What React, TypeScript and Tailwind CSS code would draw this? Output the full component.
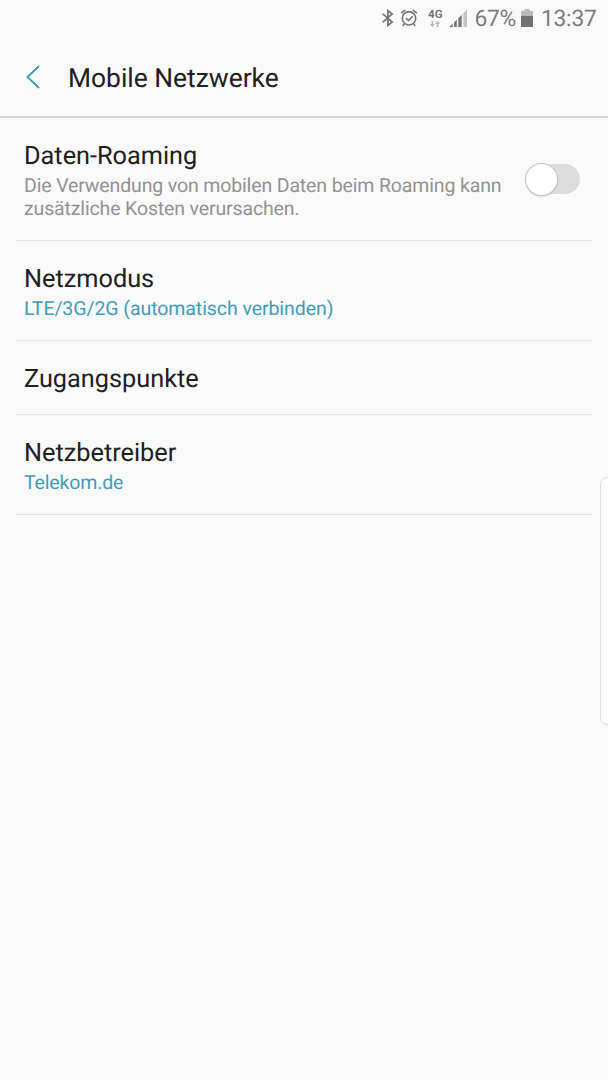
import type { ReactNode } from "react";

function BluetoothIcon() {
  return (
    <svg width="12" height="18" viewBox="0 0 12 18" fill="none" stroke="#757575" strokeWidth="1.7">
      <path d="M0.8 4.8 10.2 13 5.9 16.4V1.6L10.2 5 0.8 13.2" />
    </svg>
  );
}

function AlarmIcon() {
  return (
    <svg width="18" height="20" viewBox="0 0 18 20" fill="none" stroke="#757575" strokeWidth="1.6">
      <circle cx="9" cy="10.3" r="6.7" />
      <path d="M5.9 10 8.5 12.5 12.7 8.2M1.2 5.2 5.2 2M16.8 5.2 12.8 2M4.6 15.400 2.8 18M13.4 15.400 15.2 18" />
    </svg>
  );
}

function DataArrows() {
  return (
    <svg width="10" height="6" viewBox="0 0 10 6" fill="#b5b5b5">
      <path d="M1.6 0h1.6v3h1.6L2.4 6 0 3h1.6zM6.8 6h1.6V3H10L7.6 0 5.200 3h1.600z" />
    </svg>
  );
}

function SignalIcon() {
  return (
    <svg width="19" height="18" viewBox="0 0 19 18">
      <path fill="#757575" d="M0.200 18 3.700 14.600V18zM5 13.500 7.800 10.700V18H5zM9.300 9.200 12.700 5.800V18H9.300z" />
      <path fill="#c4c4c4" d="M14.300 4.200 18 0.500V18H14.300z" />
    </svg>
  );
}

function BatteryIcon() {
  return (
    <svg width="12" height="18" viewBox="0 0 12 18">
      <path fill="#bababa" d="M3.500 0h5v1.700H12V7H0V1.700h3.500z" />
      <path fill="#717171" d="M0 7h12v11H0z" />
    </svg>
  );
}

function StatusBar() {
  return (
    <div className="flex h-9 items-center text-[22.800px] leading-9 tracking-[-0.25px] text-[#7b7b7b]">
      <div className="ml-[382px] flex w-[18px] shrink-0">
        <BluetoothIcon />
      </div>
      <div className="flex w-7 shrink-0">
        <AlarmIcon />
      </div>
      <div className="flex w-[21px] shrink-0 flex-col">
        <span className="text-[11.500px] leading-[11px] font-bold tracking-[0.2px] text-[#757575]">4G</span>
        <div className="mt-px ml-[2px]">
          <DataArrows />
        </div>
      </div>
      <div className="flex w-[25.500px] shrink-0">
        <SignalIcon />
      </div>
      <span className="w-[46.500px] shrink-0 pt-0.5">67%</span>
      <div className="flex w-5 shrink-0">
        <BatteryIcon />
      </div>
      <span className="shrink-0 pt-0.5">13:37</span>
    </div>
  );
}

function Row({ title, detail, detailColor, children }: { title: string; detail?: ReactNode; detailColor?: string; children?: ReactNode }) {
  return (
    <li className="mx-[15px] flex items-start border-b border-[#e5e5e5] pt-6 pb-[19px] pl-[9px]">
      <div className="grow">
        <h2 className="text-[25.300px] leading-[30px] text-[#202020]">{title}</h2>
        {detail && <p className={`mt-0.5 mb-px text-[19.500px] leading-[23px] whitespace-nowrap ${detailColor}`}>{detail}</p>}
      </div>
      {children}
    </li>
  );
}

function Toggle() {
  return (
    <button role="switch" aria-checked="false" aria-label="Daten-Roaming" className="mt-[22px] mr-[13px] flex h-[30px] w-[54px] shrink-0 items-center rounded-full bg-[#dcdcdc]">
      <span className="-ml-[0.5px] size-[31px] shrink-0 rounded-full bg-white shadow-[0_0_0_1px_#c4c4c4,0_1px_2px_#0005]" />
    </button>
  );
}

export default function App() {
  return (
    <div className="relative h-[1080px] w-[608px] overflow-hidden bg-[#fafafa] font-['Roboto','Noto_Sans',sans-serif] [text-rendering:geometricPrecision]">
      <StatusBar />
      <header className="flex h-[82px] items-center border-b-2 border-[#d2d2d2] pl-[26px]">
        <svg className="mt-px" width="14" height="24" viewBox="0 0 14 24" fill="none" stroke="#3b9dbd" strokeWidth="1.8">
          <path d="M13 1 1.500 12 13 23" />
        </svg>
        <h1 className="ml-7 pt-1.5 text-[26.400px] leading-8 text-[#202020]">Mobile Netzwerke</h1>
      </header>
      <ul>
        <Row
          title="Daten-Roaming"
          detailColor="text-[#929292] tracking-[-0.140px]"
          detail={
            <>
              Die Verwendung von mobilen Daten beim Roaming kann
              <br />
              zusätzliche Kosten verursachen.
            </>
          }
        >
          <Toggle />
        </Row>
        <Row title="Netzmodus" detail="LTE/3G/2G (automatisch verbinden)" detailColor="text-[#3d9cbc] tracking-[-0.070px]" />
        <Row title="Zugangspunkte" />
        <Row title="Netzbetreiber" detail="Telekom.de" detailColor="text-[#3d9cbc] tracking-[-0.150px]" />
      </ul>
      <div className="absolute top-[477px] -right-1 h-[248px] w-3 rounded-l-[7px] border border-[#dfdfdf] bg-[#fcfcfc]" />
    </div>
  );
}
